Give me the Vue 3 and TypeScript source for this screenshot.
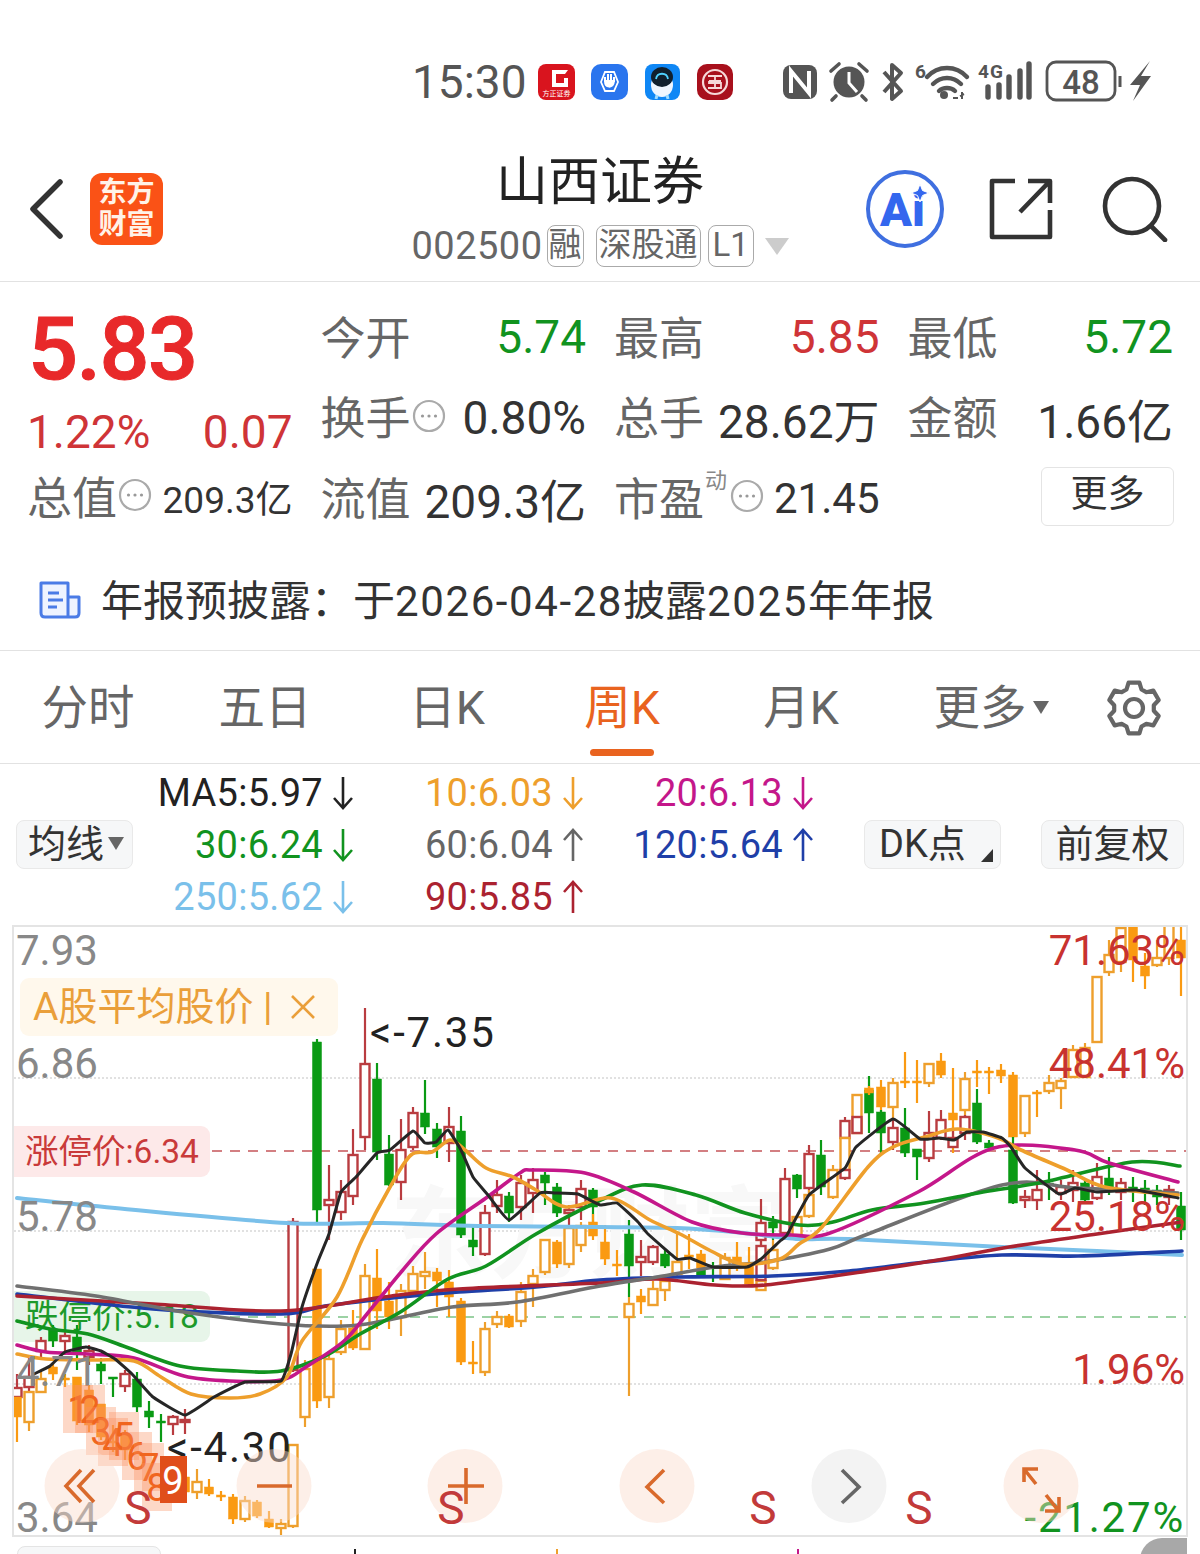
<script setup lang="ts">
// 一根K线：[序号, 最高, 实体上沿, 实体下沿, 最低, 类型]，数值是画布上的 y 坐标
type Candle = [number, number, number, number, number, string]

const candleData: Candle[] = [
  [0, 1374, 1388, 1397, 1397, 'r'], [0, 1397, 1397, 1417, 1442, 'O'],
  [1, 1357, 1377, 1387, 1392, 'r'], [1, 1392, 1392, 1422, 1431, 'o'],
  [2, 1337, 1341, 1351, 1360, 'r'], [2, 1372, 1379, 1392, 1392, 'o'],
  [3, 1325, 1329, 1341, 1347, 'g'], [3, 1362, 1367, 1374, 1380, 'O'],
  [4, 1330, 1336, 1341, 1355, 'r'], [4, 1374, 1378, 1380, 1387, 'O'],
  [5, 1325, 1337, 1354, 1370, 'g'], [5, 1377, 1377, 1421, 1425, 'O'],
  [6, 1345, 1351, 1357, 1365, 'r'], [6, 1385, 1390, 1425, 1432, 'O'],
  [7, 1358, 1364, 1371, 1384, 'g'], [7, 1404, 1404, 1437, 1440, 'O'],
  [8, 1377, 1377, 1379, 1397, 'g'], [8, 1425, 1441, 1443, 1452, 'O'],
  [9, 1370, 1374, 1386, 1392, 'r'], [9, 1430, 1434, 1450, 1460, 'O'],
  [10, 1372, 1379, 1407, 1412, 'g'], [11, 1401, 1411, 1417, 1428, 'g'],
  [12, 1414, 1421, 1423, 1442, 'g'], [13, 1415, 1417, 1424, 1435, 'r'],
  [14, 1409, 1420, 1422, 1434, 'r'], [14, 1470, 1477, 1492, 1498, 'O'],
  [15, 1469, 1482, 1492, 1499, 'o'], [16, 1479, 1487, 1494, 1496, 'O'],
  [17, 1491, 1495, 1497, 1501, 'O'], [18, 1494, 1497, 1519, 1524, 'O'],
  [19, 1496, 1501, 1519, 1522, 'o'], [20, 1500, 1502, 1516, 1518, 'O'],
  [21, 1511, 1519, 1527, 1528, 'O'], [22, 1519, 1524, 1528, 1537, 'o'],
  [23, 1218, 1222, 1370, 1372, 'r'], [23, 1445, 1445, 1526, 1528, 'o'],
  [24, 1360, 1369, 1417, 1427, 'o'],
  [25, 1039, 1042, 1210, 1225, 'g'], [25, 1269, 1269, 1401, 1408, 'O'],
  [26, 1165, 1200, 1205, 1240, 'r'], [26, 1355, 1359, 1397, 1408, 'o'],
  [27, 1180, 1192, 1212, 1220, 'r'], [27, 1320, 1329, 1352, 1355, 'o'],
  [28, 1129, 1155, 1196, 1205, 'r'], [28, 1310, 1328, 1348, 1350, 'O'],
  [29, 1008, 1064, 1137, 1150, 'r'], [29, 1264, 1276, 1349, 1350, 'o'],
  [30, 1063, 1079, 1152, 1160, 'g'], [30, 1249, 1278, 1311, 1329, 'O'],
  [31, 1135, 1154, 1185, 1186, 'g'], [31, 1282, 1301, 1317, 1329, 'O'],
  [32, 1119, 1150, 1182, 1200, 'r'], [32, 1284, 1291, 1317, 1336, 'o'],
  [33, 1107, 1113, 1147, 1150, 'r'], [33, 1266, 1274, 1291, 1294, 'o'],
  [34, 1080, 1113, 1127, 1134, 'g'], [34, 1252, 1272, 1276, 1289, 'o'],
  [35, 1123, 1129, 1147, 1158, 'g'], [35, 1268, 1272, 1281, 1307, 'O'],
  [36, 1107, 1127, 1143, 1162, 'r'], [36, 1270, 1282, 1297, 1317, 'O'],
  [37, 1116, 1131, 1235, 1238, 'g'], [37, 1298, 1301, 1362, 1365, 'O'],
  [38, 1227, 1240, 1247, 1256, 'g'], [38, 1341, 1362, 1364, 1374, 'O'],
  [39, 1205, 1213, 1254, 1256, 'r'], [39, 1322, 1329, 1372, 1376, 'o'],
  [40, 1180, 1195, 1206, 1213, 'r'], [40, 1311, 1317, 1324, 1328, 'o'],
  [41, 1192, 1196, 1213, 1222, 'g'], [41, 1314, 1316, 1327, 1328, 'O'],
  [42, 1175, 1183, 1207, 1220, 'r'], [42, 1282, 1292, 1321, 1327, 'o'],
  [43, 1168, 1180, 1193, 1213, 'r'], [43, 1269, 1276, 1284, 1307, 'o'],
  [44, 1172, 1175, 1183, 1205, 'g'], [44, 1240, 1240, 1272, 1275, 'o'],
  [45, 1183, 1187, 1213, 1217, 'g'], [45, 1240, 1242, 1264, 1268, 'O'],
  [46, 1205, 1210, 1213, 1232, 'r'], [46, 1226, 1228, 1264, 1268, 'o'],
  [47, 1180, 1189, 1207, 1220, 'r'], [47, 1222, 1226, 1245, 1252, 'o'],
  [48, 1188, 1190, 1207, 1228, 'g'], [48, 1214, 1222, 1236, 1240, 'O'],
  [49, 1225, 1242, 1259, 1265, 'O'], [50, 1250, 1264, 1266, 1276, 'O'],
  [51, 1220, 1234, 1266, 1297, 'g'], [51, 1297, 1304, 1317, 1396, 'o'],
  [52, 1240, 1257, 1262, 1276, 'r'], [52, 1289, 1296, 1302, 1314, 'O'],
  [53, 1245, 1247, 1262, 1265, 'r'], [53, 1281, 1289, 1305, 1306, 'o'],
  [54, 1250, 1254, 1266, 1268, 'g'], [54, 1281, 1281, 1290, 1301, 'o'],
  [55, 1234, 1262, 1274, 1276, 'o'], [56, 1234, 1255, 1257, 1269, 'O'],
  [57, 1250, 1254, 1268, 1270, 'O'], [57, 1268, 1270, 1277, 1278, 'g'],
  [58, 1262, 1266, 1268, 1282, 'g'], [59, 1253, 1258, 1279, 1280, 'o'],
  [60, 1242, 1257, 1264, 1271, 'O'], [61, 1247, 1264, 1284, 1286, 'O'],
  [62, 1199, 1223, 1240, 1240, 'r'], [62, 1240, 1281, 1290, 1290, 'o'], [62, 1240, 1246, 1280, 1280, 'r'],
  [63, 1216, 1222, 1228, 1240, 'g'], [63, 1240, 1250, 1268, 1270, 'o'],
  [64, 1168, 1179, 1233, 1240, 'r'], [65, 1174, 1175, 1189, 1198, 'g'], [65, 1215, 1217, 1235, 1236, 'o'],
  [66, 1145, 1154, 1188, 1193, 'r'], [66, 1190, 1195, 1216, 1218, 'o'],
  [67, 1140, 1155, 1187, 1195, 'g'], [68, 1165, 1170, 1197, 1199, 'o'],
  [69, 1117, 1121, 1138, 1140, 'r'], [69, 1138, 1138, 1170, 1178, 'o'], [69, 1170, 1170, 1178, 1180, 'r'],
  [70, 1095, 1095, 1133, 1134, 'o'], [70, 1117, 1117, 1133, 1134, 'r'],
  [71, 1076, 1090, 1113, 1133, 'g'], [71, 1086, 1088, 1093, 1095, 'O'],
  [72, 1080, 1087, 1107, 1155, 'O'], [72, 1110, 1112, 1133, 1155, 'g'],
  [73, 1078, 1083, 1107, 1120, 'o'], [73, 1120, 1128, 1142, 1150, 'r'],
  [74, 1052, 1081, 1083, 1088, 'O'], [74, 1108, 1128, 1153, 1157, 'g'],
  [75, 1060, 1081, 1083, 1103, 'O'], [75, 1149, 1149, 1157, 1180, 'g'],
  [76, 1064, 1064, 1083, 1087, 'o'], [76, 1111, 1133, 1158, 1162, 'r'],
  [77, 1053, 1061, 1075, 1078, 'O'], [77, 1110, 1120, 1138, 1140, 'r'],
  [78, 1068, 1113, 1120, 1153, 'O'], [78, 1130, 1138, 1147, 1148, 'r'],
  [79, 1072, 1079, 1110, 1116, 'o'], [79, 1115, 1117, 1133, 1140, 'r'],
  [80, 1060, 1071, 1073, 1087, 'O'], [80, 1089, 1103, 1142, 1144, 'g'],
  [81, 1067, 1071, 1073, 1094, 'O'], [81, 1140, 1143, 1148, 1150, 'g'],
  [82, 1064, 1070, 1076, 1083, 'O'],
  [83, 1072, 1075, 1137, 1138, 'O'], [83, 1137, 1150, 1203, 1204, 'g'],
  [84, 1096, 1096, 1133, 1137, 'o'], [84, 1190, 1197, 1200, 1208, 'r'],
  [85, 1090, 1092, 1094, 1117, 'O'], [85, 1170, 1190, 1200, 1210, 'r'],
  [86, 1075, 1083, 1091, 1094, 'o'], [86, 1172, 1183, 1185, 1200, 'g'],
  [87, 1078, 1081, 1088, 1109, 'o'], [87, 1180, 1187, 1193, 1200, 'r'],
  [88, 1045, 1050, 1077, 1078, 'o'], [88, 1170, 1183, 1190, 1202, 'r'],
  [89, 1043, 1048, 1077, 1078, 'o'], [89, 1180, 1183, 1200, 1202, 'g'],
  [90, 977, 977, 1042, 1042, 'o'], [90, 1163, 1177, 1198, 1200, 'r'],
  [91, 940, 955, 972, 976, 'o'], [91, 1157, 1178, 1187, 1195, 'g'],
  [92, 925, 928, 962, 972, 'o'], [92, 1178, 1183, 1192, 1200, 'r'],
  [93, 925, 927, 960, 982, 'O'], [93, 1177, 1187, 1190, 1202, 'g'],
  [94, 953, 966, 976, 989, 'O'], [94, 1180, 1188, 1190, 1205, 'g'],
  [95, 940, 958, 965, 967, 'o'], [95, 1185, 1190, 1197, 1205, 'g'],
  [96, 925, 925, 958, 965, 'o'], [96, 1185, 1190, 1197, 1205, 'r'],
  [97, 927, 940, 958, 996, 'O'], [97, 1192, 1206, 1230, 1240, 'g']
]

const candleColor: Record<string, string> = { r: '#b93c40', g: '#0a9a14', o: '#ee9f2c', O: '#fa9a12' }

const candles = candleData.map(([i, hi, top, bot, lo, kind]) => ({
  x: 17 + i * 12,
  hi,
  top,
  h: Math.max(bot - top, 2),
  lo,
  color: candleColor[kind],
  hollow: kind === 'r' || kind === 'o'
}))

// 折线点转成平滑路径
function smooth(pts: string, tension = 0.16): string {
  const p = pts.trim().split(/\s+/).map((s) => s.split(',').map(Number))
  let d = `M${p[0][0]} ${p[0][1]}`
  for (let i = 0; i < p.length - 1; i++) {
    const a = p[Math.max(i - 1, 0)]
    const b = p[i]
    const c = p[i + 1]
    const e = p[Math.min(i + 2, p.length - 1)]
    d += ` C${b[0] + (c[0] - a[0]) * tension} ${b[1] + (c[1] - a[1]) * tension} ${c[0] - (e[0] - b[0]) * tension} ${c[1] - (e[1] - b[1]) * tension} ${c[0]} ${c[1]}`
  }
  return d
}

const maLines = [
  { color: '#7ac0ea', w: 4, pts: '17,1198 115,1208 287,1223 383,1223 478,1226 600,1227 677,1228 734,1232 799,1239 849,1239 1002,1247 1097,1251 1182,1255' },
  { color: '#1f3fa8', w: 3.6, pts: '17,1294 153,1309 281,1314 325,1306 402,1297 459,1292 536,1287 600,1280 677,1277 772,1276 849,1271 925,1262 1002,1255 1078,1256 1182,1251' },
  { color: '#ab2230', w: 3.6, pts: '17,1296 153,1304 281,1311 383,1297 459,1289 600,1283 657,1279 715,1285 765,1285 868,1271 944,1259 1009,1247 1097,1234 1182,1222' },
  { color: '#707070', w: 3.6, pts: '17,1286 96,1296 184,1312 281,1324 344,1326 383,1321 452,1307 517,1302 600,1286 657,1277 715,1267 765,1262 830,1249 868,1234 1002,1185 1078,1188 1178,1193' },
  { color: '#11931f', w: 3.6, pts: '17,1321 50,1329 88,1334 126,1347 180,1366 237,1371 281,1371 325,1356 360,1334 402,1311 448,1279 486,1266 536,1234 597,1202 642,1185 696,1195 745,1213 799,1225 833,1222 872,1210 925,1203 983,1192 1044,1182 1132,1162 1180,1166' },
  { color: '#c4178a', w: 3.6, pts: '17,1345 46,1352 88,1354 134,1358 184,1376 230,1381 281,1380 306,1367 344,1341 367,1314 402,1271 436,1234 486,1198 520,1173 532,1170 585,1173 634,1192 692,1222 742,1233 791,1235 830,1233 918,1192 994,1148 1075,1150 1109,1163 1178,1182' },
  { color: '#ee9f2c', w: 3.6, pts: '17,1354 46,1359 92,1360 134,1361 161,1377 191,1394 230,1398 260,1394 287,1377 302,1341 337,1297 362,1240 390,1187 411,1155 432,1152 450,1140 465,1150 486,1168 513,1177 536,1190 566,1207 611,1198 650,1220 680,1234 711,1251 742,1264 780,1259 799,1244 822,1227 868,1167 893,1147 925,1137 958,1129 998,1138 1021,1150 1067,1170 1105,1187 1178,1195' },
  { color: '#262626', w: 3, pts: '34,1374 50,1366 65,1352 86,1347 101,1351 115,1359 132,1374 153,1397 185,1415 214,1397 245,1382 281,1381 291,1354 302,1307 318,1261 329,1234 341,1192 356,1177 377,1153 390,1150 413,1131 425,1143 436,1142 448,1130 461,1150 473,1177 488,1195 509,1220 540,1193 555,1193 578,1194 600,1205 617,1203 638,1222 648,1234 677,1259 690,1258 713,1267 747,1267 761,1259 780,1241 787,1235 809,1195 845,1168 856,1147 893,1119 920,1139 939,1138 954,1140 967,1132 983,1132 1002,1138 1011,1147 1025,1168 1059,1194 1075,1188 1097,1192 1136,1190 1178,1198' }
].map((l) => ({ color: l.color, w: l.w, d: smooth(l.pts, l.color === '#262626' ? 0.06 : 0.16) }))

const maValues = [
  { text: 'MA5:5.97', color: '#222', up: false },
  { text: '10:6.03', color: '#ee9f2c', up: false },
  { text: '20:6.13', color: '#c4178a', up: false },
  { text: '30:6.24', color: '#11931f', up: false },
  { text: '60:6.04', color: '#666', up: true },
  { text: '120:5.64', color: '#1f3fa8', up: true },
  { text: '250:5.62', color: '#7ac0ea', up: false },
  { text: '90:5.85', color: '#ab2230', up: true }
]

const axisLeft = [
  { t: '7.93', y: 965 }, { t: '6.86', y: 1078 }, { t: '5.78', y: 1231 }, { t: '4.71', y: 1386 }, { t: '3.64', y: 1532 }
]
const axisRight = [
  { t: '71.63%', y: 965, c: '#c8322f' }, { t: '48.41%', y: 1078, c: '#c8322f' }, { t: '25.18%', y: 1231, c: '#c8322f' },
  { t: '1.96%', y: 1384, c: '#c8322f' }, { t: '-21.27%', y: 1532, c: '#11931f' }
]
const sellMarks = [138, 451, 763, 919]
const navCircles = [
  { x: 82, grey: false }, { x: 274, grey: false }, { x: 465, grey: false },
  { x: 657, grey: false }, { x: 849, grey: true }, { x: 1041, grey: false }
]
// 神奇九转序号
const nineMarks = [
  { n: 1, x: 78, y: 1409 }, { n: 2, x: 90, y: 1409 }, { n: 3, x: 101, y: 1431 }, { n: 4, x: 113, y: 1442 },
  { n: 5, x: 124, y: 1436 }, { n: 6, x: 137, y: 1456 }, { n: 7, x: 149, y: 1467 }, { n: 8, x: 157, y: 1487 }
]

const tabs = ['分时', '五日', '日K', '周K', '月K']

// 设置图标的齿轮轮廓
function gearPath(cx: number, cy: number): string {
  const pts: string[] = []
  for (let k = 0; k < 6; k++) {
    const a = (k * 60 - 90) * (Math.PI / 180)
    const add = (r: number, off: number) => {
      const t = a + (off * Math.PI) / 180
      pts.push(`${(cx + r * Math.cos(t)).toFixed(1)} ${(cy + r * Math.sin(t)).toFixed(1)}`)
    }
    add(20, -22)
    add(26, -12)
    add(26, 12)
    add(20, 22)
  }
  return 'M' + pts.join(' L') + ' Z'
}
const gear = gearPath(28, 28)
</script>

<template>
  <div class="page">
    <svg width="0" height="0" class="defs">
      <symbol id="dots" viewBox="0 0 34 34">
        <circle cx="17" cy="17" r="15" fill="none" stroke="#aaa" stroke-width="2.2" />
        <circle cx="10.5" cy="17" r="1.6" fill="#999" /><circle cx="17" cy="17" r="1.6" fill="#999" /><circle cx="23.5" cy="17" r="1.6" fill="#999" />
      </symbol>
      <symbol id="arrow-down" viewBox="0 0 24 36">
        <path d="M12 2V33M3 23L12 33L21 23" fill="none" stroke="currentColor" stroke-width="2.6" />
      </symbol>
      <symbol id="arrow-up" viewBox="0 0 24 36">
        <path d="M12 34V3M3 13L12 3L21 13" fill="none" stroke="currentColor" stroke-width="2.6" />
      </symbol>
    </svg>

    <!-- 状态栏 -->
    <div class="status">
      <span class="clock">15:30</span>
      <svg class="apps" width="196" height="38" viewBox="538 61 196 38">
        <rect x="538" y="62" width="37" height="36" rx="8" fill="#d9141e" />
        <path d="M552 68H568L565 72H556V81H564V76H568V85H552Z" fill="#fff" />
        <text x="556.5" y="94" font-size="7" fill="#fff" text-anchor="middle">方正证券</text>
        <rect x="591" y="62" width="37" height="36" rx="10" fill="#2a75ee" />
        <path d="M601 80L605 70H614L618 80L614 89H605Z" fill="none" stroke="#fff" stroke-width="1.8" />
        <path d="M605 80V75M608 80V72M611 80V72M614 80V75M605 79C605 86 613 87 614 79Z" stroke="#fff" stroke-width="2" fill="#fff" />
        <rect x="645" y="62" width="35" height="36" rx="8" fill="#0f87f5" />
        <ellipse cx="662" cy="83" rx="11" ry="12" fill="#eef6ff" />
        <ellipse cx="662" cy="75" rx="11" ry="10" fill="#10202e" />
        <path d="M656 77C657 70 667 70 668 77" fill="none" stroke="#4fd2ff" stroke-width="1.8" />
        <path d="M657 93L656 97M667 93L668 97" stroke="#9fdcff" stroke-width="3" />
        <rect x="697" y="62" width="36" height="36" rx="10" fill="#a8101c" />
        <circle cx="715" cy="80" r="12" fill="none" stroke="#f6d8d8" stroke-width="2.2" />
        <path d="M708 74H722M715 74V78M709 79H721M709 79V81H721V86H708M715 81V86" fill="none" stroke="#f6d8d8" stroke-width="1.8" />
      </svg>
      <svg class="sys" width="370" height="50" viewBox="783 56 370 50">
        <!-- NFC -->
        <rect x="783" y="64" width="34" height="34" rx="8" fill="#555" />
        <path d="M791 92V70L809 92V70" fill="none" stroke="#fff" stroke-width="4" />
        <!-- 闹钟 -->
        <circle cx="849" cy="81" r="15.5" fill="#555" />
        <path d="M849 71V82L857 91" fill="none" stroke="#fff" stroke-width="3" />
        <path d="M831 70L839 63M867 70L859 63M836 95L832 99M862 95L866 99" stroke="#555" stroke-width="3.6" stroke-linecap="round" />
        <!-- 蓝牙 -->
        <path d="M884 71L901 90L892 98V64L901 72L884 91" fill="none" stroke="#555" stroke-width="4" stroke-linejoin="round" />
        <!-- wifi -->
        <text x="915" y="77" font-size="19" font-weight="700" fill="#555">6</text>
        <path d="M927 76C938 64 956 64 967 76M933 83C941 75 953 75 961 83M939 90C943 86 951 86 955 90" fill="none" stroke="#555" stroke-width="4.4" stroke-linecap="round" />
        <circle cx="944" cy="94" r="4" fill="#555" />
        <path d="M953 97H958M962 91V98M960 95L964 93" stroke="#555" stroke-width="2" fill="none" />
        <!-- 信号 -->
        <text x="978" y="77" font-size="19" font-weight="700" fill="#555" textLength="25">4G</text>
        <path d="M988 86V96M999 84V96M1009 76V96M1020 70V96M1029 63V96" stroke="#555" stroke-width="5.4" stroke-linecap="round" />
        <!-- 电池 -->
        <rect x="1047" y="61" width="68" height="38" rx="9" fill="none" stroke="#555" stroke-width="2.8" />
        <text x="1081" y="93" font-size="33" fill="#555" text-anchor="middle" font-weight="500">48</text>
        <path d="M1120 75V86" stroke="#555" stroke-width="3" />
        <path d="M1150 60L1130 84H1140L1133 100L1151 75H1141Z" fill="#555" />
      </svg>
    </div>

    <!-- 标题栏 -->
    <header class="head">
      <div class="head-left">
        <svg width="40" height="62" viewBox="0 0 40 62">
          <path d="M33 4L6 31L33 58" fill="none" stroke="#333" stroke-width="5.5" stroke-linecap="round" stroke-linejoin="round" />
        </svg>
        <div class="logo"><span>东方</span><span>财富</span></div>
      </div>
      <div class="head-mid">
        <div class="title">山西证券</div>
        <div class="code-row">
          <span class="code">002500</span>
          <span class="tag tag-a">融</span>
          <span class="tag tag-b">深股通</span>
          <span class="tag tag-c">L1</span>
          <span class="caret"></span>
        </div>
      </div>
      <div class="head-right">
        <svg width="80" height="80" viewBox="0 0 80 80">
          <circle cx="40" cy="40" r="37" fill="#fff" stroke="#3f6fe0" stroke-width="4" />
          <text x="15" y="57" font-size="47" font-weight="900" fill="#3467ee">Ai</text>
          <path d="M55 15L57.500 21.500L64 24L57.500 26.500L55 33L52.500 26.500L46 24L52.500 21.500Z" fill="#3467ee" stroke="#fff" stroke-width="1" />
        </svg>
        <svg class="share" width="64" height="64" viewBox="0 0 64 64">
          <path d="M26 4H3V60H61V33M61 4L31 35M39 4H61V26" fill="none" stroke="#333" stroke-width="4.600" stroke-linejoin="round" />
        </svg>
        <svg class="find" width="66" height="66" viewBox="0 0 66 66">
          <circle cx="30" cy="30" r="27" fill="none" stroke="#333" stroke-width="4.600" />
          <path d="M49 50L63 64" stroke="#333" stroke-width="4.600" stroke-linecap="round" />
        </svg>
      </div>
    </header>

    <!-- 行情 -->
    <section class="quote">
      <div class="q-main">
        <div class="price">5.83</div>
        <div class="change"><span>1.22%</span><span>0.07</span></div>
        <div class="q-total">
          <span class="lab">总值</span>
          <svg class="dot-ic" width="34" height="34"><use href="#dots" /></svg>
          <span class="small-val">209.3亿</span>
        </div>
      </div>
      <div class="cell"><span class="lab">今开</span><span class="val green">5.74</span></div>
      <div class="cell"><span class="lab">最高</span><span class="val red">5.85</span></div>
      <div class="cell"><span class="lab">最低</span><span class="val green">5.72</span></div>
      <div class="cell">
        <span class="lab-wrap"><span class="lab">换手</span><svg class="dot-ic" width="34" height="34"><use href="#dots" /></svg></span>
        <span class="val">0.80%</span>
      </div>
      <div class="cell"><span class="lab">总手</span><span class="val">28.62万</span></div>
      <div class="cell"><span class="lab">金额</span><span class="val">1.66亿</span></div>
      <div class="cell"><span class="lab">流值</span><span class="val">209.3亿</span></div>
      <div class="cell">
        <span class="lab-wrap">
          <span class="lab">市盈</span><sup class="dyn">动</sup>
          <svg class="dot-ic dot-pe" width="34" height="34"><use href="#dots" /></svg>
        </span>
        <span class="val pe">21.45</span>
      </div>
      <div class="cell cell-end"><span class="more-btn">更多</span></div>
    </section>

    <!-- 公告提示 -->
    <section class="notice">
      <svg width="42" height="40" viewBox="0 0 42 40">
        <path d="M2 3H29V37H6Q2 37 2 33ZM29 17H40V33Q40 37 36 37H29" fill="#eef3ff" stroke="#4a7be6" stroke-width="3" stroke-linejoin="round" />
        <path d="M9 13H20M9 20H24M9 27H18" stroke="#4a7be6" stroke-width="3" />
      </svg>
      <span class="notice-text">年报预披露：于<span class="wide">2026-04-28</span>披露<span class="wide">2025</span>年年报</span>
    </section>

    <!-- 周期切换 -->
    <nav class="tabs">
      <span v-for="t in tabs" :key="t" class="tab" :class="{ active: t === '周K' }">{{ t }}</span>
      <span class="tab tab-more">更多<i class="tri"></i></span>
      <span class="tab tab-gear">
        <svg width="56" height="56" viewBox="0 0 56 56">
          <path :d="gear" fill="none" stroke="#666" stroke-width="4.200" stroke-linejoin="round" />
          <circle cx="28" cy="28" r="9" fill="none" stroke="#666" stroke-width="4.200" />
        </svg>
      </span>
    </nav>

    <!-- 均线数值 -->
    <section class="ma-bar">
      <span class="btn btn-ma">均线<i class="tri tri-small"></i></span>
      <div class="ma-grid">
        <span v-for="m in maValues" :key="m.text" class="ma-item" :style="{ color: m.color }">
          {{ m.text }}
          <svg width="24" height="36"><use :href="m.up ? '#arrow-up' : '#arrow-down'" /></svg>
        </span>
      </div>
      <span class="btn btn-dk">DK点<i class="corner"></i></span>
      <span class="btn btn-adj">前复权</span>
    </section>

    <!-- K线图 -->
    <section class="chart">
      <svg class="plot" width="1172" height="608" viewBox="14 927 1172 608">
        <g stroke="#d8d8d8" stroke-width="1.500" stroke-dasharray="2 2">
          <line x1="14" x2="1186" y1="1078" y2="1078" />
          <line x1="14" x2="1186" y1="1231" y2="1231" />
          <line x1="14" x2="1186" y1="1384" y2="1384" />
        </g>
        <text x="590" y="1270" class="mark" text-anchor="middle">东方财富</text>

        <rect x="20" y="978" width="318" height="58" rx="9" fill="#fff8ec" />
        <text x="33" y="1020" class="t39" fill="#ea9f3a">A股平均股价 |</text>
        <path d="M292 996L314 1018M314 996L292 1018" stroke="#ea9f3a" stroke-width="2.600" />

        <rect x="2" y="1126" width="208" height="51" rx="9" fill="#fde9e9" />
        <text x="25" y="1163" class="t35" fill="#c93a3a">涨停价:6.34</text>
        <line x1="212" x2="1186" y1="1151" y2="1151" stroke="#c5565a" stroke-width="1.500" stroke-dasharray="10 8" />
        <rect x="2" y="1291" width="208" height="51" rx="9" fill="#e7f5e9" />
        <text x="25" y="1328" class="t35" fill="#1c9a2a">跌停价:5.18</text>
        <line x1="212" x2="1186" y1="1317" y2="1317" stroke="#7cc486" stroke-width="1.500" stroke-dasharray="10 8" />

        <g v-for="(c, i) in candles" :key="i">
          <line :x1="c.x" :x2="c.x" :y1="c.hi" :y2="c.lo" :stroke="c.color" stroke-width="2.200" />
          <rect
            :x="c.x - 4.500"
            :y="c.top"
            width="9"
            :height="c.h"
            :fill="c.hollow ? '#fff' : c.color"
            :stroke="c.color"
            :stroke-width="c.hollow ? 2.4 : 0.5"
          />
        </g>
        <path
          v-for="l in maLines"
          :key="l.color"
          :d="l.d"
          fill="none"
          :stroke="l.color"
          :stroke-width="l.w"
          stroke-linejoin="round"
          stroke-linecap="round"
        />

        <text x="370" y="1047" class="t42 note" fill="#222">&lt;-7.35</text>
        <text x="167" y="1462" class="t42 note" fill="#222">&lt;-4.30</text>

        <text v-for="a in axisLeft" :key="a.t" x="16" :y="a.y" class="t42" fill="#888">{{ a.t }}</text>
        <text
          v-for="a in axisRight"
          :key="a.t"
          x="1185"
          :y="a.y"
          class="t42"
          :class="{ note: a.t.startsWith('-') }"
          text-anchor="end"
          :fill="a.c"
        >{{ a.t }}</text>

        <g v-for="n in nineMarks" :key="n.n">
          <rect :x="n.x - 15" :y="n.y - 24" width="30" height="48" fill="#f98f5f" opacity="0.35" />
          <text :x="n.x" :y="n.y + 14" class="t38" text-anchor="middle" fill="#f0651e">{{ n.n }}</text>
        </g>
        <rect x="160" y="1456" width="27" height="47" fill="#e04e1a" />
        <text x="173" y="1494" class="t38" text-anchor="middle" fill="#fff">9</text>

        <ellipse
          v-for="b in navCircles"
          :key="b.x"
          :cx="b.x"
          cy="1486"
          rx="37.500"
          ry="37"
          :fill="b.grey ? '#e4e4e4' : '#fbdccb'"
          opacity="0.45"
        />
        <g fill="none" stroke="#d96a2c" stroke-width="3.600">
          <path d="M81 1470L66 1486L81 1502M94 1470L79 1486L94 1502" />
          <path d="M257 1486H292" />
          <path d="M448 1486H484M466 1468V1504" />
          <path d="M664 1470L647 1487L664 1503" />
          <path d="M1024 1469L1036 1484M1024 1482V1469H1038M1046 1495L1058 1510M1059 1497V1511H1045" />
        </g>
        <path d="M842 1470L859 1487L842 1503" fill="none" stroke="#666" stroke-width="3.600" />

        <text v-for="x in sellMarks" :key="x" :x="x" y="1524" class="t44" text-anchor="middle" fill="#c23a3a">S</text>
      </svg>
    </section>

    <!-- 下方被截断的一行 -->
    <footer class="bottom">
      <span class="vol-btn"></span>
      <i class="stub stub-a"></i>
      <i class="stub stub-b"></i>
      <i class="stub stub-c"></i>
      <span class="handle"></span>
    </footer>
  </div>
</template>

<style>
html,
body {
  margin: 0;
  background: #fff;
}
</style>

<style scoped>
.page {
  position: relative;
  width: 1200px;
  height: 1554px;
  overflow: hidden;
  background: #fff;
  color: #333;
  font-family: Roboto, "Noto Sans CJK SC", sans-serif;
}

.defs {
  position: absolute;
}

.status {
  display: flex;
  align-items: center;
  height: 141px;
  padding: 22px 0 0 412px;
  box-sizing: border-box;
}

.clock {
  width: 126px;
  font-size: 46px;
  color: #555;
  line-height: 1;
}

.apps {
  display: block;
}

.sys {
  display: block;
  margin-left: 49px;
}

.head {
  display: grid;
  grid-template-columns: 1fr auto 1fr;
  align-items: center;
  height: 141px;
  border-bottom: 1.5px solid #e2e2e2;
  box-sizing: border-box;
}

.head-left {
  display: flex;
  align-items: center;
  padding-left: 27px;
  gap: 23px;
  margin-top: -5px;
}

.logo {
  display: flex;
  flex-direction: column;
  align-items: center;
  justify-content: center;
  width: 73px;
  height: 72px;
  border-radius: 12px;
  background: #fa5216;
  color: #fff2e8;
  font-size: 28px;
  font-weight: 700;
  line-height: 32px;
}

.head-mid {
  display: flex;
  flex-direction: column;
  align-items: center;
}

.title {
  font-size: 52px;
  line-height: 62px;
  color: #222;
}

.code-row {
  display: flex;
  align-items: center;
  height: 48px;
  margin-top: 8px;
}

.code {
  font-size: 38px;
  letter-spacing: 0.5px;
  color: #666;
}

.tag {
  display: inline-block;
  height: 40px;
  line-height: 38px;
  font-size: 33px;
  color: #666;
  border: 1px solid #aaa;
  border-radius: 8px;
  text-align: center;
}

.tag-a {
  width: 35px;
  margin-left: 4px;
}

.tag-b {
  width: 103px;
  margin-left: 12px;
}

.tag-c {
  width: 44px;
  margin-left: 7px;
}

.caret {
  width: 0;
  height: 0;
  margin-left: 11px;
  border-left: 12px solid transparent;
  border-right: 12px solid transparent;
  border-top: 17px solid #ccc;
}

.head-right {
  display: flex;
  align-items: center;
  justify-content: flex-end;
  padding-right: 32px;
  margin-top: -5px;
}

.share {
  margin-left: 44px;
}

.find {
  margin-left: 49px;
}

.quote {
  display: grid;
  grid-template-columns: repeat(4, 265.5px);
  grid-template-rows: 80px 81px 80px;
  column-gap: 28px;
  padding: 15px 0 0 27px;
  height: 269px;
  box-sizing: border-box;
}

.q-main {
  grid-row: 1 / span 3;
}

.price {
  margin-left: 1px;
  font-size: 88px;
  font-weight: 500;
  letter-spacing: -1.5px;
  line-height: 104px;
  color: #e8292a;
  -webkit-text-stroke: 1px #e8292a;
}

.change {
  display: flex;
  justify-content: space-between;
  font-size: 46px;
  line-height: 62px;
  color: #cf3437;
}

.q-total {
  display: flex;
  align-items: center;
  height: 68px;
}

.small-val {
  margin-left: auto;
  font-size: 37px;
  color: #333;
}

.cell {
  display: flex;
  align-items: center;
  justify-content: space-between;
}

.cell-end {
  justify-content: flex-end;
}

.lab-wrap {
  display: flex;
  align-items: center;
}

.lab {
  margin-top: -4px;
  font-size: 45px;
  color: #666;
}

.val {
  font-size: 46px;
  color: #333;
}

.pe {
  font-size: 42px;
}

.red {
  color: #cf3437;
}

.green {
  color: #11931f;
}

.dot-ic {
  margin-left: 1px;
  margin-top: -4px;
}

.dot-pe {
  margin-left: 3px;
}

.dyn {
  align-self: flex-start;
  margin: 2px 0 0 1px;
  font-size: 22px;
  line-height: 1;
  color: #888;
}

.more-btn {
  display: block;
  width: 133px;
  height: 59px;
  box-sizing: border-box;
  border: 1px solid #e4e4e4;
  border-radius: 6px;
  font-size: 37px;
  line-height: 54px;
  text-align: center;
  color: #333;
  margin: -4px -1px 0 0;
}

.notice {
  display: flex;
  align-items: center;
  gap: 20px;
  height: 100px;
  padding-left: 39px;
  box-sizing: border-box;
  border-bottom: 1.5px solid #e2e2e2;
  font-size: 42px;
  color: #333;
}

.notice svg {
  margin-top: -2px;
}

.notice-text {
  margin-top: -7px;
}

.wide {
  letter-spacing: 1.600px;
}

.tabs {
  display: grid;
  grid-template-columns: 176px 178px 186px 164px 194px 186px 100px;
  align-items: center;
  height: 113px;
  box-sizing: border-box;
  border-bottom: 1.5px solid #e2e2e2;
}

.tab {
  position: relative;
  text-align: center;
  font-size: 46.500px;
  line-height: 114px;
  color: #666;
}

.tab.active {
  color: #e9631f;
}

.tab.active::after {
  content: "";
  position: absolute;
  left: 50%;
  bottom: 9px;
  width: 64px;
  height: 7px;
  margin-left: -32px;
  border-radius: 4px;
  background: #e9631f;
}

.tab-gear {
  display: flex;
  justify-content: center;
}

.tab-gear svg {
  align-self: center;
}

.tri {
  display: inline-block;
  width: 0;
  height: 0;
  margin-left: 6px;
  vertical-align: 10px;
  border-left: 8px solid transparent;
  border-right: 8px solid transparent;
  border-top: 13px solid #666;
}

.tri-small {
  margin-left: 4px;
  vertical-align: 7px;
}

.ma-bar {
  display: flex;
  align-items: center;
  height: 161px;
  padding-left: 16px;
  box-sizing: border-box;
}

.btn {
  position: relative;
  display: block;
  height: 49px;
  box-sizing: border-box;
  border: 1px solid #e9e9e9;
  border-radius: 8px;
  background: #f6f7f8;
  font-size: 38px;
  line-height: 46px;
  color: #333;
  white-space: nowrap;
}

.btn-ma {
  width: 117px;
  padding-left: 11px;
}

.btn-dk {
  width: 137px;
  margin-left: 49px;
  padding-left: 14px;
}

.btn-adj {
  width: 143px;
  margin-left: 40px;
  text-align: center;
}

.corner {
  position: absolute;
  right: 7px;
  bottom: 6px;
  width: 0;
  height: 0;
  border-left: 12px solid transparent;
  border-bottom: 13px solid #333;
}

.ma-grid {
  display: grid;
  grid-template-columns: 222px 230px 230px;
  grid-auto-rows: 52px;
}

.ma-item {
  display: flex;
  align-items: center;
  justify-content: flex-end;
  gap: 8px;
  font-size: 38px;
  letter-spacing: 0.3px;
  white-space: nowrap;
}

.chart {
  width: 1176px;
  height: 612px;
  margin-left: 12px;
  box-sizing: border-box;
  border: 2px solid #e4e4e4;
  overflow: hidden;
}

.plot {
  display: block;
}

.t35 {
  font-size: 33.500px;
}

.t38 {
  font-size: 38px;
}

.t39 {
  font-size: 39px;
}

.t42 {
  font-size: 42px;
}

.t44 {
  font-size: 46px;
}

.note {
  letter-spacing: 1.800px;
}

.mark {
  font-size: 100px;
  font-weight: 700;
  fill: #f8f8f8;
}

.bottom {
  position: relative;
  height: 17px;
}

.vol-btn {
  position: absolute;
  left: 17px;
  top: 9px;
  width: 144px;
  height: 30px;
  box-sizing: border-box;
  border: 1px solid #e4e4e4;
  border-radius: 8px;
  background: #f6f7f8;
}

.stub {
  position: absolute;
  top: 12px;
  width: 2px;
  height: 6px;
}

.stub-a {
  left: 354px;
  background: #222;
}

.stub-b {
  left: 556px;
  background: #ee9f2c;
}

.stub-c {
  left: 797px;
  background: #c4178a;
}

.handle {
  position: absolute;
  left: 1140px;
  top: 1px;
  width: 47px;
  height: 30px;
  border-radius: 22px 0 0 0;
  background: #a8a8a8;
}
</style>
